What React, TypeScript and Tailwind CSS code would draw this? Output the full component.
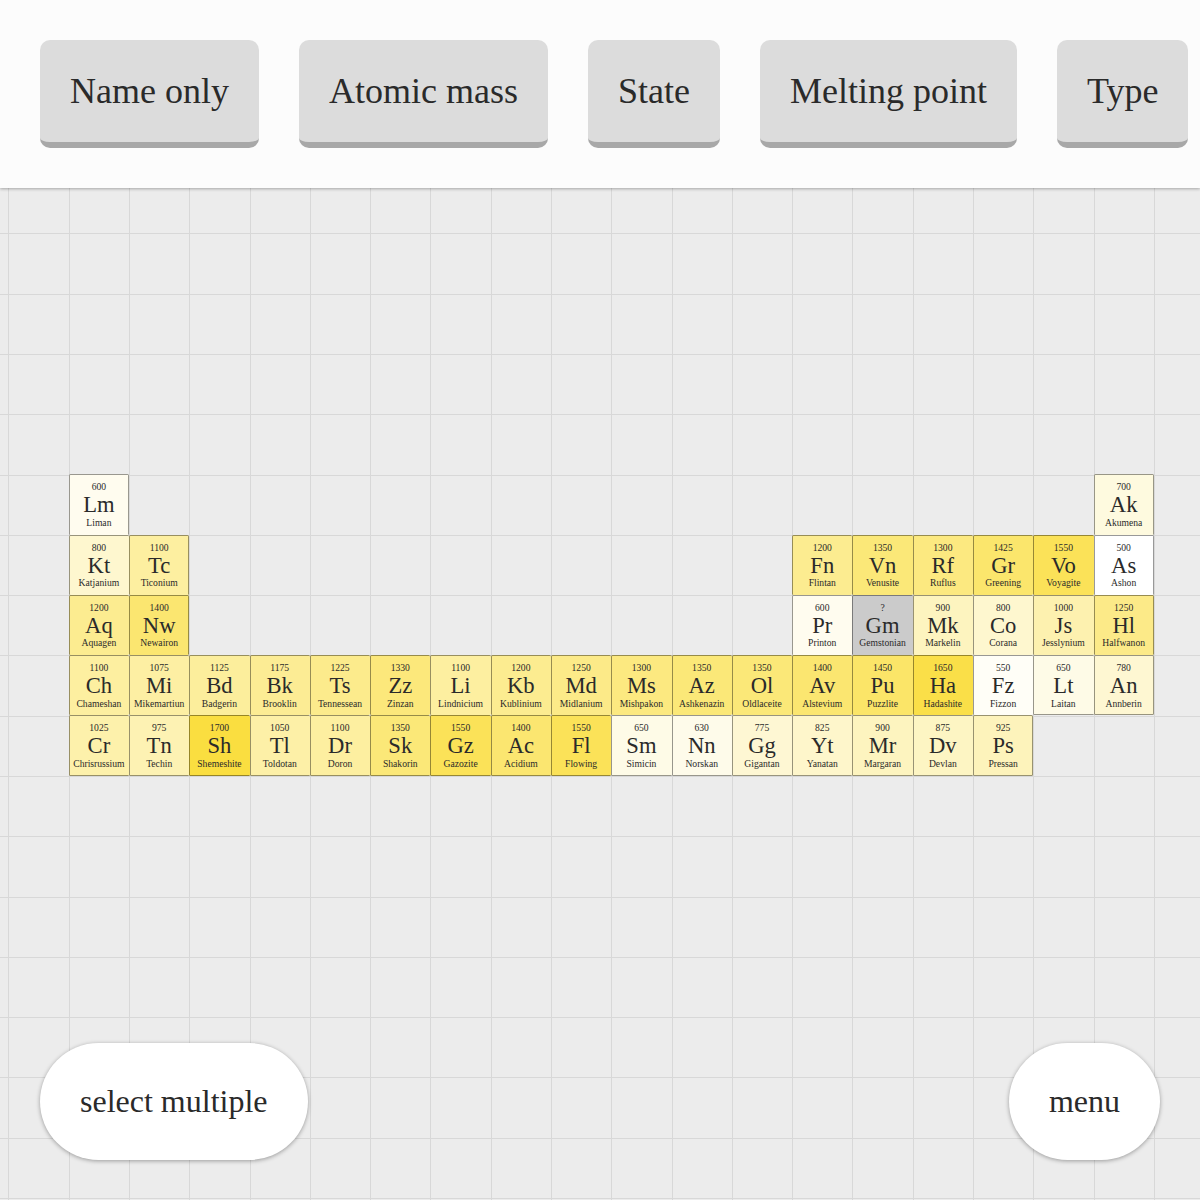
import React from "react";

type Element = [col: number, row: number, symbol: string, name: string, melting: number | null];

const ELEMENTS: Element[] = [
  [1, 1, "Lm", "Liman", 600],
  [18, 1, "Ak", "Akumena", 700],
  [1, 2, "Kt", "Katjanium", 800],
  [2, 2, "Tc", "Ticonium", 1100],
  [13, 2, "Fn", "Flintan", 1200],
  [14, 2, "Vn", "Venusite", 1350],
  [15, 2, "Rf", "Ruflus", 1300],
  [16, 2, "Gr", "Greening", 1425],
  [17, 2, "Vo", "Voyagite", 1550],
  [18, 2, "As", "Ashon", 500],
  [1, 3, "Aq", "Aquagen", 1200],
  [2, 3, "Nw", "Newairon", 1400],
  [13, 3, "Pr", "Printon", 600],
  [14, 3, "Gm", "Gemstonian", null],
  [15, 3, "Mk", "Markelin", 900],
  [16, 3, "Co", "Corana", 800],
  [17, 3, "Js", "Jesslynium", 1000],
  [18, 3, "Hl", "Halfwanon", 1250],
  [1, 4, "Ch", "Chameshan", 1100],
  [2, 4, "Mi", "Mikemartiun", 1075],
  [3, 4, "Bd", "Badgerin", 1125],
  [4, 4, "Bk", "Brooklin", 1175],
  [5, 4, "Ts", "Tennessean", 1225],
  [6, 4, "Zz", "Zinzan", 1330],
  [7, 4, "Li", "Lindnicium", 1100],
  [8, 4, "Kb", "Kublinium", 1200],
  [9, 4, "Md", "Midlanium", 1250],
  [10, 4, "Ms", "Mishpakon", 1300],
  [11, 4, "Az", "Ashkenazin", 1350],
  [12, 4, "Ol", "Oldlaceite", 1350],
  [13, 4, "Av", "Alstevium", 1400],
  [14, 4, "Pu", "Puzzlite", 1450],
  [15, 4, "Ha", "Hadashite", 1650],
  [16, 4, "Fz", "Fizzon", 550],
  [17, 4, "Lt", "Laitan", 650],
  [18, 4, "An", "Annberin", 780],
  [1, 5, "Cr", "Chrisrussium", 1025],
  [2, 5, "Tn", "Techin", 975],
  [3, 5, "Sh", "Shemeshite", 1700],
  [4, 5, "Tl", "Toldotan", 1050],
  [5, 5, "Dr", "Doron", 1100],
  [6, 5, "Sk", "Shakorin", 1350],
  [7, 5, "Gz", "Gazozite", 1550],
  [8, 5, "Ac", "Acidium", 1400],
  [9, 5, "Fl", "Flowing", 1550],
  [10, 5, "Sm", "Simicin", 650],
  [11, 5, "Nn", "Norskan", 630],
  [12, 5, "Gg", "Gigantan", 775],
  [13, 5, "Yt", "Yanatan", 825],
  [14, 5, "Mr", "Margaran", 900],
  [15, 5, "Dv", "Devlan", 875],
  [16, 5, "Ps", "Pressan", 925],
];

const FILTERS = ["Name only", "Atomic mass", "State", "Melting point", "Type"];

// Board columns and rows that lie before the first element's square.
const COLS = 21;
const ROWS = 18;
const COL_OFFSET = 2;
const ROW_OFFSET = 5;

const occupied = new Set(ELEMENTS.map(([col, row]) => `${col},${row}`));

// Shades from white at 500 to deep yellow at 1700; unknown values are grey.
function heat(value: number | null) {
  if (value === null) return "#cbcbcb";
  const t = (value - 500) / 1200;
  const mix = (end: number) => Math.round(255 + (end - 255) * t);
  return `rgb(${mix(250)}, ${mix(222)}, ${mix(64)})`;
}

function Tile({ element }: { element: Element }) {
  const [col, row, symbol, name, melting] = element;
  // Neighbouring tiles share one line, so only open sides get a right or bottom border.
  const right = occupied.has(`${col + 1},${row}`) ? "pr-px" : "border-r";
  const bottom = occupied.has(`${col},${row + 1}`) ? "" : "border-b";
  return (
    <div
      className={`relative top-[-0.35px] z-10 flex flex-col items-center overflow-hidden whitespace-nowrap rounded-[1.5px] border-l border-t border-black/40 pt-[6px] ${right} ${bottom}`}
      style={{ gridColumn: col + COL_OFFSET, gridRow: row + ROW_OFFSET, backgroundColor: heat(melting) }}
    >
      <span className="text-[9.64px] leading-[11px]">{melting ?? "?"}</span>
      <span className="text-[22.6px] leading-[25px]">{symbol}</span>
      <span className="mt-[-0.35px] text-[9.64px] leading-[11px]">{name}</span>
    </div>
  );
}

function Board() {
  const squares = Array.from({ length: COLS * ROWS }, (_, i) => i);
  return (
    <div className="absolute left-[-51.82px] top-[173.2px] grid grid-cols-[repeat(21,60.285px)] grid-rows-[repeat(18,60.285px)]">
      {squares.map((i) => (
        <div
          key={i}
          className="border-l border-t border-[#d8d8d8]"
          style={{ gridColumn: (i % COLS) + 1, gridRow: Math.floor(i / COLS) + 1 }}
        />
      ))}
      {ELEMENTS.map((element) => (
        <Tile key={element[2]} element={element} />
      ))}
    </div>
  );
}

const PILL =
  "h-[117px] rounded-full bg-white px-10 text-[32px] leading-[37px] shadow-[0_1px_4px_rgba(0,0,0,0.35)]";

export default function App() {
  return (
    <div className="relative flex h-[1200px] w-[1200px] flex-col justify-between overflow-hidden bg-[#ececec] font-['Liberation_Serif',serif] text-[#2a2a2a]">
      <Board />
      <header className="relative z-20 flex h-[188px] shrink-0 gap-10 bg-[#fcfcfc] p-10 shadow-[0_1px_3px_rgba(0,0,0,0.3)]">
        {FILTERS.map((label) => (
          <button
            key={label}
            className="h-[108px] shrink-0 whitespace-nowrap rounded-[10px] border-b-[6px] border-[#a8a8a8] bg-[#dcdcdc] px-[30px] text-[36px] leading-[42px]"
          >
            {label}
          </button>
        ))}
      </header>
      <footer className="relative z-20 flex justify-between p-10">
        <button className={PILL}>select multiple</button>
        <button className={PILL}>menu</button>
      </footer>
    </div>
  );
}
